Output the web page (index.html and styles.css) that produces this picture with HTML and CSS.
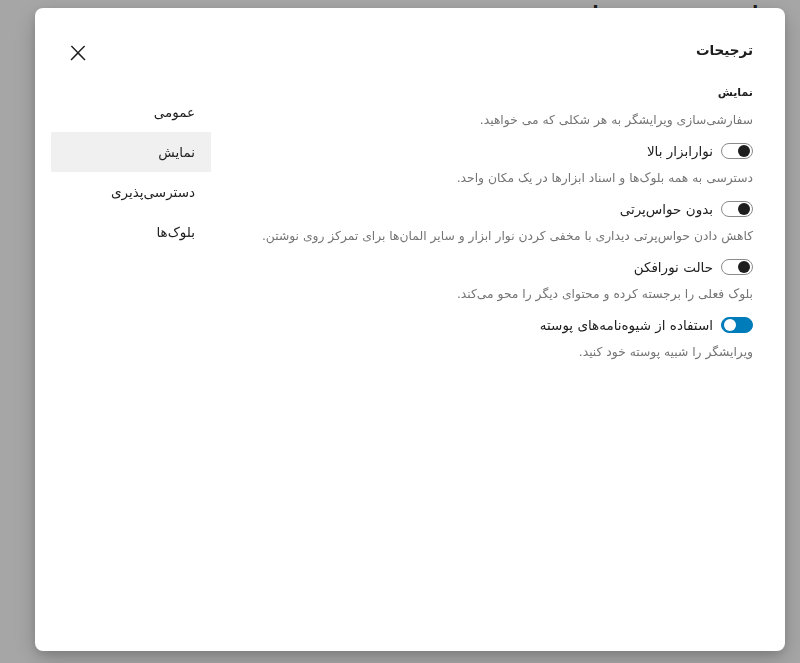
FILE: index.html
```html
<!DOCTYPE html>
<html lang="fa" dir="rtl">
<head>
<meta charset="utf-8">
<title>ترجیحات</title>
<link rel="stylesheet" href="styles.css">
</head>
<body>
<div class="page">
  <div class="page-title">افزودن عنوان</div>
</div>
<div class="overlay">
  <div class="modal" role="dialog">
    <div class="modal-header">
      <h1 class="modal-title">ترجیحات</h1>
      <button class="close" aria-label="بستن">
        <svg width="24" height="24" viewBox="0 0 24 24"><path d="M13 11.8l6.1-6.3-1-1-6.1 6.2-6.1-6.2-1 1 6.1 6.3-6.5 6.7 1 1 6.5-6.6 6.5 6.6 1-1z" fill="#1e1e1e"/></svg>
      </button>
    </div>
    <div class="modal-body">
      <div class="content">
        <h2 class="section-title">نمایش</h2>
        <p class="section-desc">سفارشی‌سازی ویرایشگر به هر شکلی که می خواهید.</p>
        <div class="option">
          <label class="toggle-row"><span class="toggle"><span class="knob"></span></span><span class="label">نوارابزار بالا</span></label>
          <p class="help">دسترسی به همه بلوک‌ها و اسناد ابزارها در یک مکان واحد.</p>
        </div>
        <div class="option">
          <label class="toggle-row"><span class="toggle"><span class="knob"></span></span><span class="label">بدون حواس‌پرتی</span></label>
          <p class="help">کاهش دادن حواس‌پرتی دیداری با مخفی کردن نوار ابزار و سایر المان‌ها برای تمرکز روی نوشتن.</p>
        </div>
        <div class="option">
          <label class="toggle-row"><span class="toggle"><span class="knob"></span></span><span class="label">حالت نورافکن</span></label>
          <p class="help">بلوک فعلی را برجسته کرده و محتوای دیگر را محو می‌کند.</p>
        </div>
        <div class="option">
          <label class="toggle-row"><span class="toggle is-checked"><span class="knob"></span></span><span class="label">استفاده از شیوه‌نامه‌های پوسته</span></label>
          <p class="help">ویرایشگر را شبیه پوسته خود کنید.</p>
        </div>
      </div>
      <nav class="tabs">
        <div class="tab">عمومی</div>
        <div class="tab is-active">نمایش</div>
        <div class="tab">دسترسی‌پذیری</div>
        <div class="tab">بلوک‌ها</div>
      </nav>
    </div>
  </div>
</div>
</body>
</html>
```
FILE: styles.css
```css
* { box-sizing: border-box; }
html, body {
  margin: 0;
  padding: 0;
  height: 100%;
}
body {
  font-family: "DejaVu Sans", "Noto Sans", sans-serif;
  background: #fff;
  color: #1e1e1e;
  overflow: hidden;
}
.page {
  height: 100%;
  padding-right: 30px;
  padding-top: 2px;
}
.page-title {
  font-size: 34px;
  line-height: 34px;
  margin-right: 10px;
  color: #2a2a2a;
}
.overlay {
  position: fixed;
  inset: 0;
  background: rgba(0, 0, 0, 0.35);
  padding: 8px 15px 12px 35px;
  display: flex;
}
.modal {
  flex: 1;
  background: #fff;
  border-radius: 8px;
  box-shadow: 0 8px 24px rgba(0, 0, 0, 0.2), 0 3px 8px rgba(0,0,0,0.12);
  display: flex;
  flex-direction: column;
  padding: 0 32px 0 16px;
}
.modal-header {
  display: flex;
  align-items: flex-start;
  justify-content: space-between;
  height: 77px;
  padding-top: 32px;
  padding-left: 15px;
}
.modal-title {
  margin: 0;
  font-size: 13.5px;
  font-weight: bold;
  line-height: 20px;
}
.close {
  border: 0;
  background: none;
  padding: 0;
  margin-top: 1px;
  width: 24px;
  height: 24px;
  display: flex;
  align-items: center;
  justify-content: center;
}
.modal-body {
  display: flex;
  gap: 48px;
}
.content {
  flex: 1;
}
.section-title {
  margin: 0;
  font-size: 11px;
  font-weight: bold;
  line-height: 16px;
}
.section-desc {
  margin: 11px 0 0;
  font-size: 12.3px;
  line-height: 16px;
  color: #757575;
}
.option {
  margin-top: 14px;
}
.option + .option {
  margin-top: 14px;
}
.toggle-row {
  display: flex;
  align-items: center;
  gap: 8px;
}
.label {
  font-size: 13.5px;
  line-height: 18px;
}
.toggle {
  width: 32px;
  height: 16px;
  border-radius: 8px;
  border: 1px solid #8a8a8a;
  background: #fff;
  display: flex;
  align-items: center;
  justify-content: flex-start;
  padding: 0 2px;
  flex: none;
}
.knob {
  width: 12px;
  height: 12px;
  border-radius: 50%;
  background: #1e1e1e;
}
.toggle.is-checked {
  background: #007cba;
  border-color: #007cba;
  justify-content: flex-end;
}
.toggle.is-checked .knob {
  background: #fff;
}
.help {
  margin: 10px 0 0;
  font-size: 12.3px;
  line-height: 16px;
  color: #757575;
}
.tabs {
  width: 160px;
  flex: none;
  margin-top: 7px;
}
.tab {
  height: 40px;
  display: flex;
  align-items: center;
  padding: 0 16px;
  font-size: 13.5px;
  color: #1e1e1e;
}
.tab.is-active {
  background: #f0f0f0;
}
```
